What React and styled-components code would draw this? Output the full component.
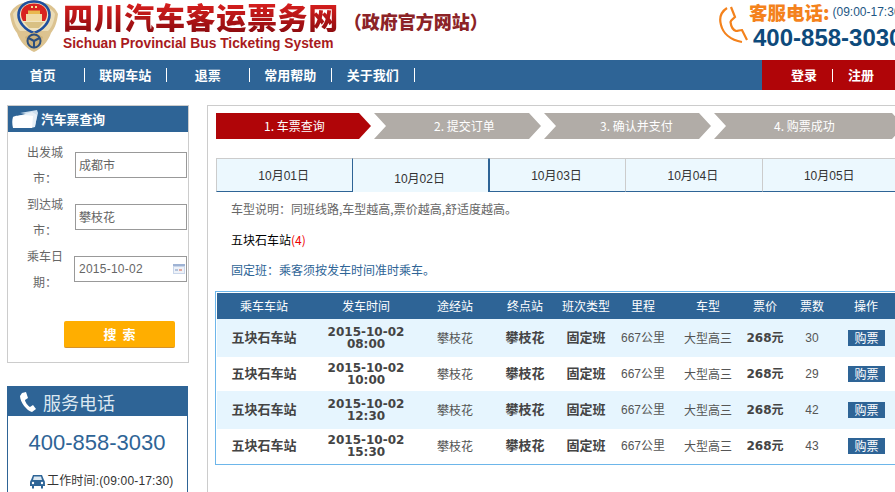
import React from "react";
import styled, { createGlobalStyle } from "styled-components";

const cjk = '"Noto Sans CJK SC", sans-serif';
const latin = '"Liberation Sans", "Noto Sans CJK SC", sans-serif';
const dejavu = '"DejaVu Sans", "Noto Sans CJK SC", sans-serif';
const blue = "#2e6496";

const Global = createGlobalStyle`
  html, body { margin: 0; padding: 0; overflow: hidden; background: #fff; }
  body { font: 12px/1.2 ${latin}; color: #666; }
  * { box-sizing: border-box; }
`;

const Page = styled.div`
  width: 895px;
  height: 492px;
  overflow: hidden;
`;

const Header = styled.header`
  height: 60px;
  display: flex;
  padding-left: 10px;
  position: relative;
`;
const Brand = styled.div`
  margin-left: 5px;
  width: 430px;
  flex: none;
`;
const TitleRow = styled.div`
  display: flex;
  align-items: flex-start;
  height: 37px;
`;
const Title = styled.h1`
  margin: 0;
  font: 900 30px/32px ${cjk};
  letter-spacing: 0.65px;
  white-space: nowrap;
  background: linear-gradient(#e0211f, #8f0c10);
  -webkit-background-clip: text;
  background-clip: text;
  color: transparent;
`;
const Official = styled.span`
  margin: 3px 0 0 5px;
  font: 900 18px/36px ${cjk};
  height: 34px;
  color: #8c2327;
  white-space: nowrap;
`;
const Sub = styled.div`
  font: bold 13.8px/14px ${latin};
  color: #a81a20;
  white-space: nowrap;
`;
const Hotline = styled.div`
  margin-left: auto;
  display: flex;
  width: 177px;
  flex: none;
  padding-top: 4px;
  white-space: nowrap;
`;
const HotlineText = styled.div`
  margin-left: 1px;
  width: 146px;
  flex: none;
`;
const HotlineTop = styled.div`
  display: flex;
  align-items: center;
  height: 17px;
`;
const HotlineLabel = styled.span`
  font: 900 18.5px/17px ${cjk};
  color: #f4821c;
`;
const HotlineHours = styled.span`
  margin-left: 3px;
  font: 12px/17px ${latin};
  color: #1d5683;
`;
const HotlineNumber = styled.div`
  margin: 5px 0 0 4px;
  font: bold 24px/24px ${latin};
  color: #0e4a7b;
`;

const Nav = styled.nav`
  height: 30px;
  background: ${blue};
  display: flex;
  align-items: center;
  padding-left: 2px;
  color: #fff;
  font: bold 13px/14px ${cjk};
`;
const NavItem = styled.a`
  width: 82.5px;
  height: 14px;
  border-right: 1px solid #fff;
  text-align: center;
`;
const Auth = styled.div`
  margin-left: auto;
  width: 133px;
  height: 30px;
  background: #b00508;
  display: flex;
  align-items: center;
  padding-left: 29px;
`;
const AuthSep = styled.span`
  width: 1px;
  height: 13px;
  background: #fff;
  margin: 0 15px;
`;

const Body = styled.div`
  display: flex;
  padding: 15px 0 0 7px;
  align-items: flex-start;
`;
const Side = styled.aside`
  width: 182px;
  flex: none;
`;
const SearchPanel = styled.section`
  height: 258px;
  border: 1px solid #ccc;
`;
const SearchHead = styled.div`
  height: 26px;
  background: ${blue};
  display: flex;
  align-items: center;
  padding-left: 4px;
  gap: 3px;
  color: #fff;
  font: bold 12.8px/26px ${cjk};
`;
const Form = styled.div`
  padding-top: 7px;
`;
const FieldRow = styled.div`
  display: flex;
  align-items: center;
  height: 52px;
  padding-left: 17px;
`;
const FieldLabel = styled.label`
  width: 40px;
  flex: none;
  font: 12px/26px ${cjk};
  color: #666;
  text-align: center;
`;
const FieldBox = styled.div`
  height: 26px;
  width: ${(p) => (p.$wide ? 113 : 112)}px;
  margin-left: ${(p) => (p.$wide ? 9 : 10)}px;
  border: 1px solid #999;
  display: flex;
  align-items: center;
  justify-content: space-between;
  padding: ${(p) => (p.$wide ? "0 1px 0 4px" : "2px 1px 0 3px")};
  font: 12px/24px ${latin};
  letter-spacing: ${(p) => (p.$wide ? "0.25px" : 0)};
  color: #666;
`;
const SearchButton = styled.button`
  display: block;
  width: 111px;
  height: 27px;
  margin: 26px 0 0 56px;
  padding: 0;
  border: 0;
  border-bottom: 1px solid #d5922a;
  border-radius: 2px;
  background: #ffae00;
  color: #fff;
  font: bold 13px/26px ${cjk};
  word-spacing: 3px;
`;

const ServicePanel = styled.section`
  margin-top: 23px;
  width: 181px;
  height: 120px;
  border: 1px solid ${blue};
  border-bottom: 0;
`;
const ServiceHead = styled.div`
  height: 29px;
  background: ${blue};
  display: flex;
  align-items: center;
  padding-left: 12px;
  gap: 7px;
  font: 18px/26px ${cjk};
  color: #dce8f1;
`;
const ServicePhone = styled.div`
  margin: 14px 1px 0 0;
  text-align: center;
  font: 22px/26px ${latin};
  color: ${blue};
`;
const ServiceHours = styled.div`
  margin: 17px 0 0 22px;
  display: flex;
  align-items: center;
  gap: 2px;
  font: 12px/16px ${latin};
  letter-spacing: 0.17px;
  color: #333;
  white-space: nowrap;
`;

const Main = styled.main`
  margin-left: 18px;
  flex: none;
  width: 700px;
  height: 400px;
  border: 1px solid #ccc;
  border-width: 1px 0 0 1px;
  padding: 7px 0 0 8px;
`;
const Steps = styled.ol`
  margin: 0;
  padding: 0;
  list-style: none;
  display: flex;
  width: 720px;
`;
const Step = styled.li`
  flex: none;
  height: 26px;
  width: ${(p) => p.$w}px;
  margin-left: ${(p) => (p.$first ? 0 : 3)}px;
  padding-left: ${(p) => p.$pad}px;
  background: ${(p) => (p.$active ? "#b00508" : "#b1aca7")};
  color: #fff;
  font: 12px/26px ${cjk};
  white-space: nowrap;
  clip-path: ${(p) =>
    p.$first
      ? "polygon(0 0, calc(100% - 12px) 0, 100% 50%, calc(100% - 12px) 100%, 0 100%)"
      : "polygon(0 0, calc(100% - 12px) 0, 100% 50%, calc(100% - 12px) 100%, 0 100%, 12px 50%)"};
`;
const Tabs = styled.div`
  margin-top: 19px;
  display: flex;
  width: 700px;
`;
const Tab = styled.div`
  flex: 0 0 136.4px;
  height: 34px;
  padding-right: 2px;
  background: #ecf8fe;
  border-top: 1px solid #ccc;
  border-left: 1px solid ${(p) => (p.$active || p.$afterActive ? blue : "#ccc")};
  border-right: ${(p) => (p.$active ? `1px solid ${blue}` : 0)};
  border-bottom: ${(p) => (p.$active ? 0 : `1px solid ${blue}`)};
  text-align: center;
  color: #333;
  font: 12px/${(p) => (p.$active ? "41px" : "34px")} ${latin};
`;
const Note = styled.p`
  margin: ${(p) => p.$top}px 0 0 15px;
  font: 12px/18px ${cjk};
  color: ${(p) => p.$color};
  white-space: nowrap;
`;
const Count = styled.span`
  color: #e00;
`;
const TableBox = styled.div`
  margin: 12px 0 0 -1px;
  width: 690px;
  height: 174px;
  border: 1px solid #6db6ea;
  padding: 1px 0 0 1px;
  overflow: hidden;
`;
const Table = styled.table`
  border-collapse: collapse;
  table-layout: fixed;
  width: 680px;
  font: 12px/13px ${latin};
  color: #444;
`;
const HeadRow = styled.tr`
  height: 26px;
  background: ${blue};
  color: #fff;
`;
const Th = styled.th`
  padding: 0;
  width: ${(p) => p.$w}px;
  font: 12px/14px ${cjk};
  text-align: center;
`;
const Row = styled.tr`
  height: ${(p) => p.$h}px;
  background: ${(p) => (p.$tint ? "#e6f5fe" : "#fff")};
`;
const Td = styled.td`
  padding: 0;
  text-align: center;
  white-space: nowrap;
`;
const TdCjk = styled(Td)`
  font: 12px/14px ${cjk};
  color: #555;
`;
const TdBold = styled(Td)`
  padding-bottom: 3px;
  font: 700 13px/14px ${cjk};
  color: #444;
`;
const TdTime = styled(Td)`
  font: bold 12px/12.5px ${dejavu};
  color: #444;
`;
const TdPrice = styled(Td)`
  font: bold 12px/14px ${dejavu};
  color: #444;
`;
const TdPlain = styled(Td)`
  font: 12px/14px ${latin};
  color: #555;
`;
const Buy = styled.a`
  display: inline-block;
  width: 37px;
  height: 16px;
  margin-left: 1px;
  background: ${blue};
  color: #fff;
  font: 12px/15px ${cjk};
  vertical-align: middle;
`;

const Emblem = () => (
  <svg width="48" height="52" viewBox="0 0 48 52" style={{ flex: "none" }}>
    <path d="M24 0 L35 3 C42 5 46 9 48 14 C47 22 45 28 41 33 C38 42 31 49 24 52 C17 49 10 42 7 33 C3 28 1 22 0 14 C2 9 6 5 13 3 Z" fill="#dcc390" />
    <path d="M3 14 C6 9 10 7 14 6 L34 6 C38 7 42 9 45 14 C44 22 42 27 38 31 L10 31 C6 27 4 22 3 14Z" fill="#ebdcb6" />
    <path d="M24 1.5 C33 1.5 39.5 7 39.5 15 C39.5 22 33 30 24 33 C15 30 8.5 22 8.5 15 C8.5 7 15 1.5 24 1.5Z" fill="#f1e3bf" stroke="#1f4f9e" strokeWidth="2.6" />
    <path d="M24 3.5 C32 3.5 37 8 37 14 C37 17 36 19 35 21 H13 C12 19 11 17 11 14 C11 8 16 3.5 24 3.5Z" fill="#d8231f" />
    <rect x="16" y="14" width="16" height="7" fill="#f0dca6" />
    <rect x="18" y="10.5" width="12" height="3.5" fill="#e9b94f" />
    <rect x="21" y="6" width="2" height="2" fill="#f6e28a" />
    <rect x="25" y="6" width="2" height="2" fill="#f6e28a" />
    <path d="M14 22 H34 L29 28 H19Z" fill="#d9c083" />
    <path d="M24 32 L33 37 C31 43 28 47 24 49.5 C20 47 17 43 15 37Z" fill="#cdb27a" />
    <circle cx="24" cy="41" r="6.5" fill="none" stroke="#2c4f7e" strokeWidth="2" />
    <path d="M24 41 L24 47 M24 41 L18.5 38 M24 41 L29.5 38" stroke="#2c4f7e" strokeWidth="2" />
  </svg>
);

const Handset = () => (
  <svg width="30" height="40" viewBox="0 0 30 40" style={{ flex: "none" }} fill="none" stroke="#f4821c" strokeWidth="2.2">
    <path d="M9 4 C3 8 1 14 3 21 C5 29 12 36 24 38" />
    <path d="M13 3 L17 13 C15 15 13 16 12.5 18 C13 22 15 26 18 27 C20 27 22 26 24 26 L29 36" />
  </svg>
);

const Folder = () => (
  <svg width="26" height="19" viewBox="0 0 26 19" style={{ flex: "none" }}>
    <path d="M8 3 L25 0 L26 3 L23 16 L20 5Z" fill="#cfe0ee" />
    <path d="M6 6 L20 2 L25 5 L23 17 L19 18 Z" fill="#e8f0f7" />
    <path d="M1 7 C4 5 16 5 21 6 L20 18 L1 18 C0 14 0 10 1 7Z" fill="#fff" />
  </svg>
);

const PhoneIcon = () => (
  <svg width="16" height="20" viewBox="0 0 16 20" style={{ flex: "none" }}>
    <path d="M2 1 L6 0 L8 6 L5 8 C5 10 8 14 10 15 L13 13 L16 17 L12 20 C7 19 0 10 0 4 Z" fill="#fff" />
  </svg>
);

const CarIcon = () => (
  <svg width="15" height="15" viewBox="0 0 15 15" style={{ flex: "none" }}>
    <path d="M3 1 H12 L14 6 C15 7 15 8 15 12 H13 V14.5 H11 V12 H4 V14.5 H2 V12 H0 C0 8 0 7 1 6 Z" fill="#2e6496" />
    <path d="M4 2.5 H11 L12 6 H3Z" fill="#dce8f1" />
    <circle cx="3" cy="9" r="1.2" fill="#fff" />
    <circle cx="12" cy="9" r="1.2" fill="#fff" />
  </svg>
);

const CalendarIcon = () => (
  <svg width="12" height="10" viewBox="0 0 12 10" style={{ flex: "none" }}>
    <rect width="12" height="10" fill="#c9d6ea" />
    <rect y="0" width="12" height="2" fill="#9fb3d4" />
    <rect x="1" y="3" width="10" height="6" fill="#eef2f8" />
    <rect x="6" y="5" width="3" height="2" fill="#e3a9a0" />
    <rect x="2" y="5" width="3" height="2" fill="#b5c5dd" />
  </svg>
);

const navItems = ["首页", "联网车站", "退票", "常用帮助", "关于我们"];
const steps = [
  { label: "1. 车票查询", w: 155, pad: 48, active: true, first: true },
  { label: "2. 提交订单", w: 167, pad: 60 },
  { label: "3. 确认并支付", w: 167, pad: 56 },
  { label: "4. 购票成功", w: 190, pad: 60 },
];
const dates = ["10月01日", "10月02日", "10月03日", "10月04日", "10月05日"];
const columns = [
  ["乘车车站", 94],
  ["发车时间", 110],
  ["途经站", 68],
  ["终点站", 72],
  ["班次类型", 50],
  ["里程", 64],
  ["车型", 66],
  ["票价", 48],
  ["票数", 46],
  ["操作", 62],
];
const trips = [
  { time: "08:00", left: 30, h: 38 },
  { time: "10:00", left: 29, h: 34 },
  { time: "12:30", left: 42, h: 38 },
  { time: "15:30", left: 43, h: 34 },
];

export default function App() {
  return (
    <Page>
      <Global />
      <Header>
        <Emblem />
        <Brand>
          <TitleRow>
            <Title>四川汽车客运票务网</Title>
            <Official>（政府官方网站）</Official>
          </TitleRow>
          <Sub>Sichuan Provincial Bus Ticketing System</Sub>
        </Brand>
        <Hotline>
          <Handset />
          <HotlineText>
            <HotlineTop>
              <HotlineLabel>客服电话:</HotlineLabel>
              <HotlineHours>(09:00-17:30)</HotlineHours>
            </HotlineTop>
            <HotlineNumber>400-858-3030</HotlineNumber>
          </HotlineText>
        </Hotline>
      </Header>
      <Nav>
        {navItems.map((n) => (
          <NavItem key={n}>{n}</NavItem>
        ))}
        <Auth>
          <span>登录</span>
          <AuthSep />
          <span>注册</span>
        </Auth>
      </Nav>
      <Body>
        <Side>
          <SearchPanel>
            <SearchHead>
              <Folder />
              汽车票查询
            </SearchHead>
            <Form>
              <FieldRow>
                <FieldLabel>出发城市：</FieldLabel>
                <FieldBox>成都市</FieldBox>
              </FieldRow>
              <FieldRow>
                <FieldLabel>到达城市：</FieldLabel>
                <FieldBox>攀枝花</FieldBox>
              </FieldRow>
              <FieldRow>
                <FieldLabel>乘车日期：</FieldLabel>
                <FieldBox $wide>
                  2015-10-02
                  <CalendarIcon />
                </FieldBox>
              </FieldRow>
            </Form>
            <SearchButton>搜 索</SearchButton>
          </SearchPanel>
          <ServicePanel>
            <ServiceHead>
              <PhoneIcon />
              服务电话
            </ServiceHead>
            <ServicePhone>400-858-3030</ServicePhone>
            <ServiceHours>
              <CarIcon />
              工作时间:(09:00-17:30)
            </ServiceHours>
          </ServicePanel>
        </Side>
        <Main>
          <Steps>
            {steps.map((s) => (
              <Step key={s.label} $w={s.w} $pad={s.pad} $active={s.active} $first={s.first}>
                {s.label}
              </Step>
            ))}
          </Steps>
          <Tabs>
            {dates.map((d, i) => (
              <Tab key={d} $active={i === 1} $afterActive={i === 2}>
                {d}
              </Tab>
            ))}
          </Tabs>
          <Note $top={8} $color="#666">车型说明：同班线路,车型越高,票价越高,舒适度越高。</Note>
          <Note $top={13} $color="#000">
            五块石车站<Count>(4)</Count>
          </Note>
          <Note $top={12} $color={blue}>固定班：乘客须按发车时间准时乘车。</Note>
          <TableBox>
            <Table>
              <thead>
                <HeadRow>
                  {columns.map(([c, w]) => (
                    <Th key={c} $w={w}>{c}</Th>
                  ))}
                </HeadRow>
              </thead>
              <tbody>
                {trips.map((t, i) => (
                  <Row key={t.time} $h={t.h} $tint={i % 2 === 0}>
                    <TdBold>五块石车站</TdBold>
                    <TdTime>
                      2015-10-02
                      <br />
                      {t.time}
                    </TdTime>
                    <TdCjk>攀枝花</TdCjk>
                    <TdBold>攀枝花</TdBold>
                    <TdBold>固定班</TdBold>
                    <TdPlain>667公里</TdPlain>
                    <TdCjk>大型高三</TdCjk>
                    <TdPrice>268元</TdPrice>
                    <TdPlain>{t.left}</TdPlain>
                    <Td>
                      <Buy>购票</Buy>
                    </Td>
                  </Row>
                ))}
              </tbody>
            </Table>
          </TableBox>
        </Main>
      </Body>
    </Page>
  );
}
